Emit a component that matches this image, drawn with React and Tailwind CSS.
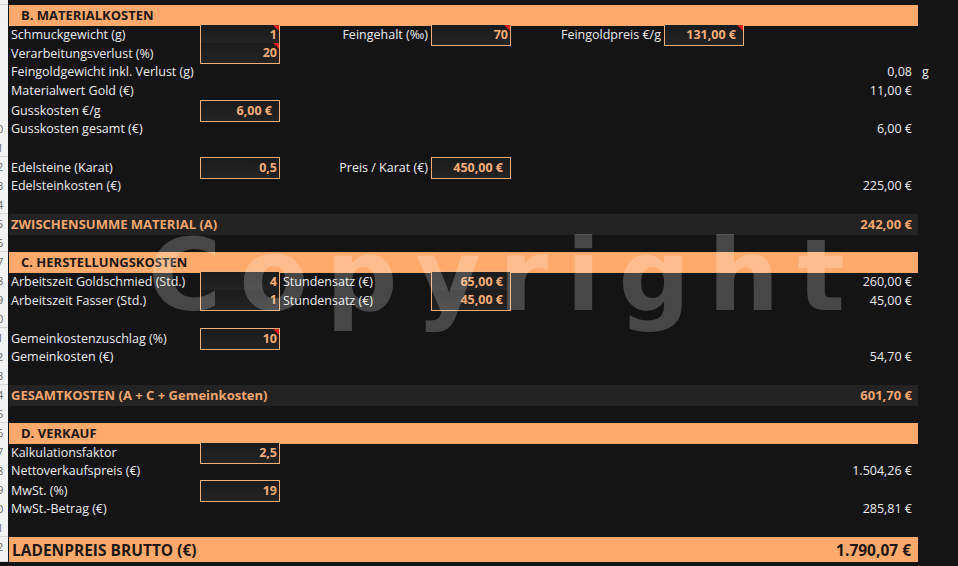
const ORANGE = 'bg-[#ffaa6c]';
const COLS = 'grid grid-cols-[8px_1px_191px_80px_151px_80px_153px_80px_174px_1fr]';

const rows = [
  { n: 3, type: 'partial' },
  { n: 4, type: 'header', label: 'B. MATERIALKOSTEN' },
  {
    n: 5,
    label: 'Schmuckgewicht (g)',
    b: { v: '1', flag: true, top: true },
    c: { text: 'Feingehalt (‰)', right: true },
    d: { v: '70', flag: true, top: true },
    e: { text: 'Feingoldpreis €/g', right: true },
    f: { v: '131,00 €', flag: true, cur: true, top: true },
  },
  { n: 6, label: 'Verarbeitungsverlust (%)', b: { v: '20', flag: true } },
  { n: 7, label: 'Feingoldgewicht inkl. Verlust (g)', g: '0,08', h: 'g' },
  { n: 8, label: 'Materialwert Gold (€)', g: '11,00 €' },
  { n: 9, label: 'Gusskosten €/g', b: { v: '6,00 €', cur: true, top: true } },
  { n: 10, label: 'Gusskosten gesamt (€)', g: '6,00 €' },
  { n: 11 },
  {
    n: 12,
    label: 'Edelsteine (Karat)',
    b: { v: '0,5', top: true },
    c: { text: 'Preis / Karat (€)', right: true },
    d: { v: '450,00 €', cur: true, top: true },
  },
  { n: 13, label: 'Edelsteinkosten (€)', g: '225,00 €' },
  { n: 14 },
  { n: 15, type: 'total', label: 'ZWISCHENSUMME MATERIAL (A)', g: '242,00 €' },
  { n: 16 },
  { n: 17, type: 'header', label: 'C. HERSTELLUNGSKOSTEN' },
  {
    n: 18,
    label: 'Arbeitszeit Goldschmied (Std.)',
    b: { v: '4', top: true },
    c: { text: 'Stundensatz (€)' },
    d: { v: '65,00 €', cur: true, top: true },
    g: '260,00 €',
  },
  {
    n: 19,
    label: 'Arbeitszeit Fasser (Std.)',
    b: { v: '1' },
    c: { text: 'Stundensatz (€)' },
    d: { v: '45,00 €', cur: true },
    g: '45,00 €',
  },
  { n: 20 },
  { n: 21, label: 'Gemeinkostenzuschlag (%)', b: { v: '10', flag: true, top: true } },
  { n: 22, label: 'Gemeinkosten (€)', g: '54,70 €' },
  { n: 23 },
  { n: 24, type: 'total', label: 'GESAMTKOSTEN (A + C + Gemeinkosten)', g: '601,70 €' },
  { n: 25 },
  { n: 26, type: 'header', label: 'D. VERKAUF' },
  { n: 27, label: 'Kalkulationsfaktor', b: { v: '2,5', top: true } },
  { n: 28, label: 'Nettoverkaufspreis (€)', g: '1.504,26 €' },
  { n: 29, label: 'MwSt. (%)', b: { v: '19', top: true } },
  { n: 30, label: 'MwSt.-Betrag (€)', g: '285,81 €' },
  { n: 31 },
  { n: 32, type: 'grand', label: 'LADENPREIS BRUTTO (€)', g: '1.790,07 €' },
];

function RowHead({ n }) {
  // Excel row header, mostly scrolled off to the left
  return (
    <div className="h-full w-[8px] overflow-hidden bg-[#f3f3f3] border-b border-[#d6d6d6]">
      <div className="w-[26px] ml-[-16px] pt-[2px] text-center text-[11px] leading-[16px] text-[#6b6b6b]">{n}</div>
    </div>
  );
}

function InputCell({ cell }) {
  if (!cell) return <div />;
  return (
    <div
      className={`relative h-full flex items-center pt-[1px] justify-end border-x border-b border-[#f4ae78] bg-gradient-to-b from-[#1b1b1b] to-[#242424] font-bold text-[#f7ad76] ${
        cell.top ? 'border-t' : ''
      } ${cell.cur ? 'pr-[7px]' : 'pr-[2px]'}`}
    >
      {cell.v}
      {cell.flag && (
        <span className="absolute top-0 right-0 w-0 h-0 border-t-[6px] border-l-[6px] border-t-[#e0201b] border-l-transparent" />
      )}
    </div>
  );
}

function TextCell({ cell }) {
  if (!cell) return <div />;
  return (
    <div className={`h-full flex items-center pt-[1px] whitespace-nowrap ${cell.right ? 'justify-end pr-[3px]' : 'pl-[3px]'}`}>
      {cell.text}
    </div>
  );
}

function Row({ r }) {
  if (r.type === 'partial') {
    return (
      <div className={`${COLS} h-[5px]`}>
        <div className="bg-[#f3f3f3] border-b border-[#d6d6d6]" />
      </div>
    );
  }
  if (r.type === 'header') {
    return (
      <div className={`${COLS} h-[19px]`}>
        <RowHead n={r.n} />
        <div />
        <div className={`col-span-7 ${ORANGE} flex items-center pt-[1px] pl-[12px] font-bold text-[#1c1714] text-[13px]`}>
          {r.label}
        </div>
      </div>
    );
  }
  if (r.type === 'total') {
    return (
      <div className={`${COLS} h-[19px]`}>
        <RowHead n={r.n} />
        <div />
        <div className="col-span-7 bg-[#232323] flex items-center pt-[1px] justify-between pl-[2px] pr-[6px] font-bold text-[#f2a66e] text-[13px]">
          <span>{r.label}</span>
          <span>{r.g}</span>
        </div>
      </div>
    );
  }
  if (r.type === 'grand') {
    return (
      <div className={`${COLS} h-[23px]`}>
        <RowHead n={r.n} />
        <div />
        <div className={`col-span-7 ${ORANGE} flex items-center pt-[2px] justify-between pl-[3px] pr-[7px] font-bold text-[#1c1714] text-[15.5px]`}>
          <span>{r.label}</span>
          <span>{r.g}</span>
        </div>
      </div>
    );
  }
  return (
    <div className={`${COLS} h-[19px]`}>
      <RowHead n={r.n} />
      <div />
      <div className="h-full flex items-center pt-[1px] pl-[2px] whitespace-nowrap">{r.label}</div>
      <InputCell cell={r.b} />
      <TextCell cell={r.c} />
      <InputCell cell={r.d} />
      <TextCell cell={r.e} />
      <InputCell cell={r.f} />
      <div className="h-full flex items-center pt-[1px] justify-end pr-[6px]">{r.g}</div>
      <div className="h-full flex items-center pt-[1px] pl-[4px]">{r.h}</div>
    </div>
  );
}

export default function App() {
  return (
    <div className="relative w-[958px] h-[566px] overflow-hidden bg-[#141414] text-[#ececec] text-[12.5px] font-['Open_Sans',sans-serif]">
      {rows.map((r) => (
        <Row key={r.n} r={r} />
      ))}

      {/* watermark over the sheet */}
      <div className="absolute left-[148px] top-[226px] pointer-events-none select-none whitespace-nowrap font-['DejaVu_Sans',sans-serif] font-bold text-[100px] leading-[100px] tracking-[18px] text-white/[0.22]">
        Copyright
      </div>
    </div>
  );
}
